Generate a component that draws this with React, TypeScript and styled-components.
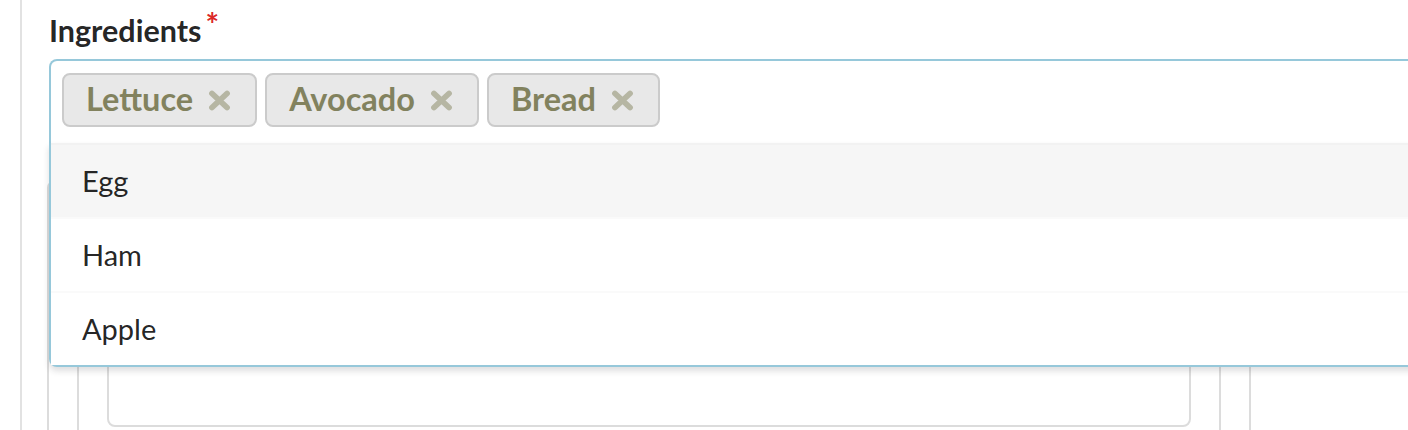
import React from "react";
import styled, { createGlobalStyle } from "styled-components";

const Global = createGlobalStyle`
  html, body { margin: 0; padding: 0; background: #fff; overflow: hidden; }
  body { font-family: Lato, "Noto Sans", sans-serif; }
  * { box-sizing: border-box; }
`;

const Page = styled.div`
  width: 1408px;
  height: 430px;
  overflow: hidden;
  padding-left: 20px;
`;

const Column = styled.div`
  height: 100%;
  border-left: 2px solid #e2e2e2;
  padding: 13px 0 0 27px;
`;

const Field = styled.div`
  width: 1400px;
`;

const Label = styled.label`
  display: block;
  font-size: 30.5px;
  line-height: 34px;
  font-weight: 700;
  color: rgba(0, 0, 0, 0.87);
  margin-bottom: 12px;
`;

const Required = styled.span`
  position: relative;
  top: -5px;
  margin-left: 4px;
  font-size: 32px;
  color: #db2828;
`;

const Dropdown = styled.div`
  position: relative;
  z-index: 2;
`;

const Control = styled.div`
  display: flex;
  flex-wrap: wrap;
  align-items: center;
  gap: 0 8px;
  background: #fff;
  border: 2px solid #96c8da;
  border-bottom: none;
  border-radius: 8px 8px 0 0;
  padding: 8px 0 12px 11px;
`;

const Chip = styled.span`
  display: inline-flex;
  align-items: center;
  margin: 4px 0;
  padding: 8px 24px 10px 22px;
  background: #e8e8e8;
  border: 2px solid #cbcbcb;
  border-radius: 8px;
  font-size: 32.5px;
  line-height: 32px;
  font-weight: 700;
  color: #82825e;
`;

const Remove = styled.svg`
  margin-left: 15px;
  margin-top: 2px;
  flex: none;
`;

const Menu = styled.div`
  position: absolute;
  top: 100%;
  left: 0;
  right: 0;
  background: #fff;
  border: 2px solid #96c8da;
  border-top: none;
  border-radius: 0 0 8px 8px;
  box-shadow: 0 4px 6px rgba(34, 36, 38, 0.15);
`;

const Item = styled.div<{ $active?: boolean }>`
  padding: 22px 31px;
  font-size: 29px;
  line-height: 28px;
  font-weight: 400;
  color: rgba(0, 0, 0, 0.87);
  border-top: 2px solid ${(p) => (p.$active ? "#f2f2f2" : "#fafafa")};
  background: ${(p) => (p.$active ? "#f6f6f6" : "#fff")};
`;

const Panel = styled.div<{ $outer?: boolean }>`
  border: 2px solid #dcdcdc;
  border-radius: 8px;
  padding: 28px;
  ${(p) =>
    p.$outer
      ? `
    width: 1204px;
    margin: 37px 0 0 -2px;
  `
      : ""}
`;

const InnerPanel = styled.div`
  height: 187px;
  border: 2px solid #dcdcdc;
  border-radius: 8px;
`;

const XIcon = () => (
  <Remove width="23" height="21" viewBox="0 0 23 21">
    <path
      d="M4 3.5 L19 17.5 M19 3.5 L4 17.5"
      stroke="#b6b6a3"
      strokeWidth="5.8"
      strokeLinecap="round"
      fill="none"
    />
  </Remove>
);

const chips = ["Lettuce", "Avocado", "Bread"];
const options = ["Egg", "Ham", "Apple"];

export default function App() {
  return (
    <>
      <Global />
      <Page>
        <Column>
          <Field>
            <Label>
              Ingredients<Required>*</Required>
            </Label>
            <Dropdown>
              <Control>
                {chips.map((c) => (
                  <Chip key={c}>
                    {c}
                    <XIcon />
                  </Chip>
                ))}
              </Control>
              <Menu>
                {options.map((o, i) => (
                  <Item key={o} $active={i === 0}>
                    {o}
                  </Item>
                ))}
              </Menu>
            </Dropdown>
          </Field>
          <Panel $outer>
            <Panel>
              <InnerPanel />
            </Panel>
          </Panel>
        </Column>
      </Page>
    </>
  );
}
